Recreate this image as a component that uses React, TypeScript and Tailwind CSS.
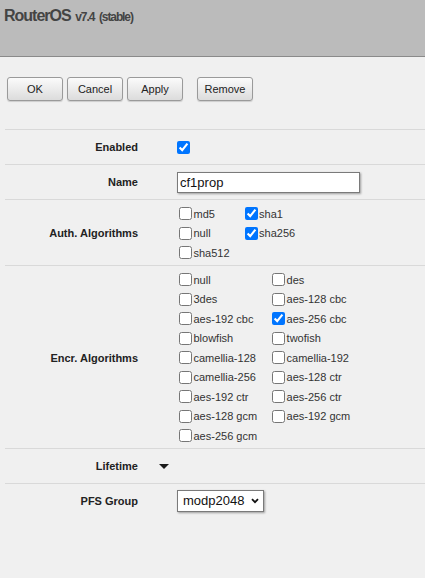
import React from "react";

type Algo = { name: string; checked?: boolean };

const authAlgos: Algo[] = [
  { name: "md5" },
  { name: "sha1", checked: true },
  { name: "null" },
  { name: "sha256", checked: true },
  { name: "sha512" },
];

const encrAlgos: Algo[] = [
  { name: "null" },
  { name: "des" },
  { name: "3des" },
  { name: "aes-128 cbc" },
  { name: "aes-192 cbc" },
  { name: "aes-256 cbc", checked: true },
  { name: "blowfish" },
  { name: "twofish" },
  { name: "camellia-128" },
  { name: "camellia-192" },
  { name: "camellia-256" },
  { name: "aes-128 ctr" },
  { name: "aes-192 ctr" },
  { name: "aes-256 ctr" },
  { name: "aes-128 gcm" },
  { name: "aes-192 gcm" },
  { name: "aes-256 gcm" },
];

const ToolButton: React.FC<{ label: string; className?: string }> = ({
  label,
  className = "",
}) => (
  <button
    className={`h-[24px] w-[56px] rounded-[3px] border border-[#9a9a9a] bg-gradient-to-b from-[#fbfbfb] to-[#dcdcdc] text-[11px] text-[#222] shadow-[0_1px_1px_rgba(0,0,0,0.15)] ${className}`}
  >
    {label}
  </button>
);

// One form row: label on the left, value on the right, line on top
const FormRow: React.FC<{
  label: string;
  toggle?: boolean;
  className?: string;
  children?: React.ReactNode;
}> = ({ label, toggle, className = "", children }) => (
  <div
    className={`ml-[5px] grid grid-cols-[133px_39px_1fr] items-center border-t border-[#d9d9d9] ${className}`}
  >
    <div className="text-right text-[11px] font-bold text-[#222]">{label}</div>
    <div className="flex items-center">
      {toggle && (
        <svg width="10" height="5" viewBox="0 0 10 5" className="ml-[20.7px]">
          <path d="M0 0H10L5 5Z" fill="#1a1a1a" />
        </svg>
      )}
    </div>
    <div className="flex items-center">{children}</div>
  </div>
);

const CheckList: React.FC<{ items: Algo[] }> = ({ items }) => (
  <div className="grid w-fit grid-cols-[auto_auto] auto-rows-[19.5px] gap-x-[15px] pl-[2px]">
    {items.map((a) => (
      <label key={a.name} className="flex items-center text-[11px] text-[#333]">
        <input type="checkbox" defaultChecked={a.checked} className="h-[13px] w-[13px]" />
        <span className="ml-[1.5px]">{a.name}</span>
      </label>
    ))}
  </div>
);

export default function App() {
  return (
    <div className="min-h-screen bg-[#f0f0f0] font-['Liberation_Sans',Arial,sans-serif]">
      {/* Header */}
      <div className="h-[57px] border-b border-[#8a8a8a] bg-[#bbbbbb] pl-[4px] pt-[4px]">
        <span className="text-[16px] font-bold tracking-[-1px] text-[#444]">RouterOS</span>{" "}
        <span className="text-[12px] font-bold tracking-[-1px] text-[#444]">v7.4</span>{" "}
        <span className="text-[12px] font-bold tracking-[-1.1px] text-[#444]">(stable)</span>
      </div>

      {/* Toolbar */}
      <div className="flex gap-[4px] pl-[7px] pt-[20px]">
        <ToolButton label="OK" />
        <ToolButton label="Cancel" />
        <ToolButton label="Apply" />
        <ToolButton label="Remove" className="ml-[10px]" />
      </div>

      <div className="mt-[28px]">
        <FormRow label="Enabled" className="h-[35px]">
          <input type="checkbox" defaultChecked className="h-[13px] w-[13px]" />
        </FormRow>

        <FormRow label="Name" className="h-[35px]">
          <input
            type="text"
            defaultValue="cf1prop"
            className="h-[21px] w-[183px] border border-[#7a7a7a] bg-white pl-[2px] text-[13px] text-[#111] shadow-[1px_1px_2px_rgba(0,0,0,0.35)] outline-none"
          />
        </FormRow>

        <FormRow label="Auth. Algorithms" className="pt-[4px] pb-[2.5px]">
          <CheckList items={authAlgos} />
        </FormRow>

        <FormRow label="Encr. Algorithms" className="pt-[4px] pb-[2.5px]">
          <CheckList items={encrAlgos} />
        </FormRow>

        <FormRow label="Lifetime" toggle className="h-[35px]" />

        <FormRow label="PFS Group" className="h-[35px]">
          <div className="flex h-[22px] w-[87px] items-center justify-between border border-[#7a7a7a] bg-white pl-[5px] pr-[4px] text-[13px] text-[#111] shadow-[1px_1px_2px_rgba(0,0,0,0.35)]">
            <span>modp2048</span>
            <svg width="8" height="6" viewBox="0 0 8 6">
              <path d="M1 1.2L4 4.2L7 1.2" fill="none" stroke="#111" strokeWidth="1.8" />
            </svg>
          </div>
        </FormRow>
      </div>
    </div>
  );
}
